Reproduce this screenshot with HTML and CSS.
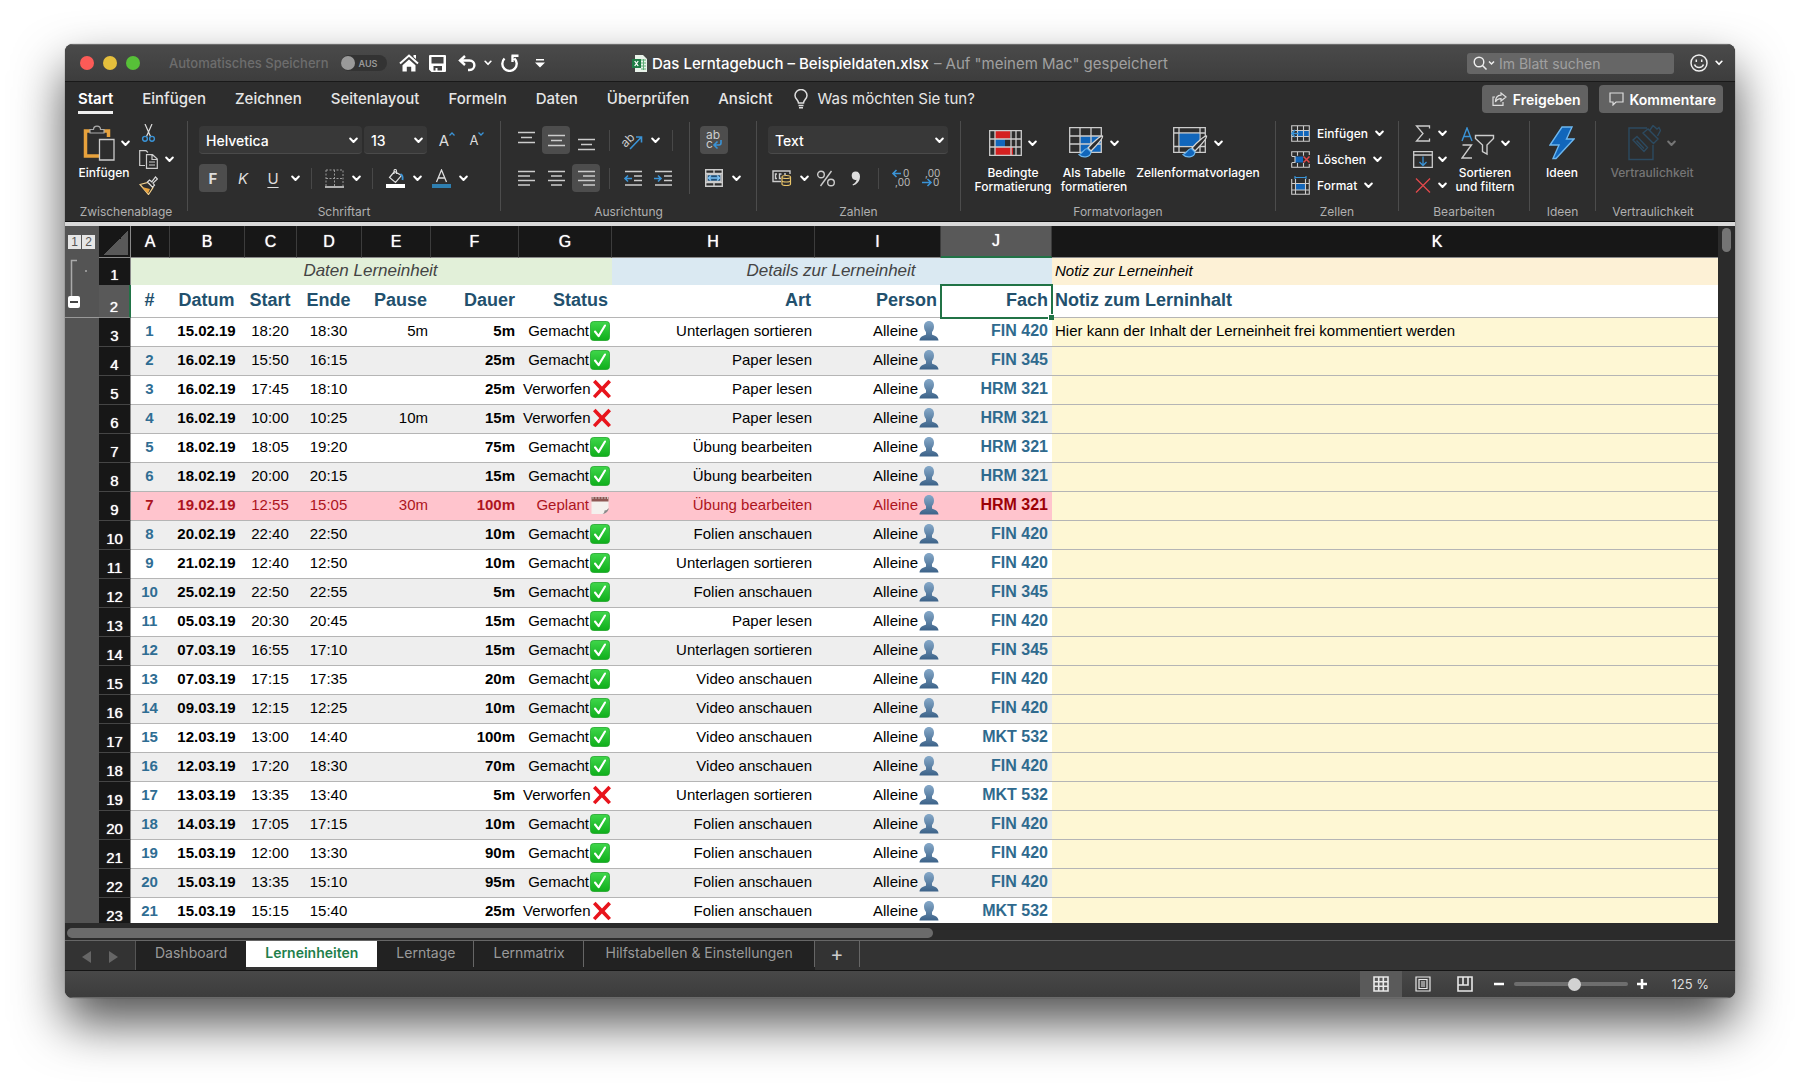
FILE: index.html
```html
<!DOCTYPE html>
<html lang="de">
<head>
<meta charset="utf-8">
<meta name="viewport" content="width=device-width, initial-scale=1">
<title>Das Lerntagebuch – Beispieldaten.xlsx</title>
<link rel="stylesheet" href="styles.css">
</head>
<body>
<svg class="defs" aria-hidden="true">
  <defs>
    <linearGradient id="green" x1="0" y1="0" x2="0" y2="1"><stop offset="0" stop-color="#3fd64a"/><stop offset="1" stop-color="#0fae1b"/></linearGradient>
    <linearGradient id="bust" x1="0" y1="0" x2="0" y2="1"><stop offset="0" stop-color="#86a9c9"/><stop offset="1" stop-color="#3c6288"/></linearGradient>
    <symbol id="chev" viewBox="0 0 9 7"><path d="M1.2 1.5l3.3 3.5 3.3-3.5" fill="none" stroke="currentColor" stroke-width="2" stroke-linecap="round" stroke-linejoin="round"/></symbol>
    <symbol id="ok" viewBox="0 0 20 20"><rect x=".5" y=".5" width="19" height="19" rx="3" fill="url(#green)" stroke="#1fa52a" stroke-width=".8"/><path d="M5 10.5l3.6 4.6L15 4.5" fill="none" stroke="#fff" stroke-width="2.1" stroke-linecap="round" stroke-linejoin="round"/></symbol>
    <symbol id="no" viewBox="0 0 20 20"><path d="M3.6.8L10 7.4 16.4.8l2.6 2.4-6.3 6.9 6.3 6.8-2.6 2.4-6.5-6.7-6.5 6.7-2.5-2.4 6.4-6.8L1 3.2z" fill="#e8141c"/></symbol>
    <symbol id="one" viewBox="0 0 20 20"><path d="M10 0c3.2 0 5 2.400 5 5.600 0 2.600-1 4.300-2 5.400v2.400c1.500 1.300 6.500 1.600 6.500 6.200H.5c0-4.600 5-4.900 6.500-6.200V11C6 9.900 5 8.200 5 5.600 5 2.400 6.800 0 10 0z" fill="url(#bust)"/></symbol>
    <symbol id="cal" viewBox="0 0 20 20"><path d="M1.500 2h17v11l-5 6h-12z" fill="#f4f1ee"/><path d="M1.500 2h17v4.500h-17z" fill="#8e5753"/><path d="M3 1v3M6 1v3M9 1v3M12 1v3M15 1v3M17.500 1v3" stroke="#ddd" stroke-width=".8"/><path d="M12.500 19c1.500-1 2-2 2-3.500 2 0 3-.8 4-2.500v1.500c-1 2.500-3 4-6 4.500z" fill="#8a8a8a"/></symbol>
    <symbol id="brush" viewBox="0 0 26 24"><path d="M24.500 1c-1.500-.5-10 6.500-14.500 12l3 3C17.500 11.500 25 3 24.500 1z" fill="#2d2d2d" stroke="#d5d5d5" stroke-width="1.300"/><path d="M9.500 13.500c-4 0-4 4.500-8.500 6 3 3.500 11.500 3.500 12-2.500z" fill="#1166bb" stroke="#6cb6ee" stroke-width="1.200"/></symbol>
  </defs>
</svg>

<main class="window">
  <header class="titlebar">
    <div class="quick">
      <span class="light red"></span><span class="light yellow"></span><span class="light green"></span>
      <label class="autosave" for="autosave">Automatisches Speichern</label>
      <span class="toggle"><input id="autosave" type="checkbox"><span>AUS</span></span>
      <button class="plain home" aria-label="Startseite"><svg width="20" height="18" viewBox="0 0 20 18"><path d="M1 9.500L10 1.500l9 8" fill="none" stroke="#fff" stroke-width="2"/><path d="M10 5.500l6.500 5.700V17.500h-4.300v-4.700H7.800v4.700H3.500v-6.300zM14.500 1H17v4l-2.500-2z" fill="#fff"/></svg></button>
      <button class="plain save" aria-label="Speichern"><svg width="17" height="17" viewBox="0 0 17 17"><path fill="#fff" fill-rule="evenodd" d="M1 0h15a1 1 0 011 1v15a1 1 0 01-1 1H2.500L0 14.500V1a1 1 0 011-1zM2.500 2v6.500h12V2zM4.500 11v4.500h2V13h2v2.500H13V11z"/></svg></button>
      <button class="plain undo" aria-label="Rückgängig"><svg width="18" height="17" viewBox="0 0 18 17"><path d="M7 1L2 5.500 7 10M2.500 5.500h9c6.500 0 6.500 9.500 0 9.500H10" fill="none" stroke="#fff" stroke-width="2.400"/></svg></button>
      <button class="plain chevron undo-menu" aria-label="Liste"><svg width="8" height="6"><use href="#chev"/></svg></button>
      <button class="plain redo" aria-label="Wiederholen"><svg width="18" height="18" viewBox="0 0 18 18"><path d="M3.500 4.500a7.200 7.200 0 1 0 9.800-.2M11.500 1.500v6.500M10.500 1.800H17.500" fill="none" stroke="#fff" stroke-width="2.400"/></svg></button>
      <button class="plain more" aria-label="Anpassen"><svg width="10" height="9" viewBox="0 0 10 9"><path d="M1 0h8v1.500H1zM0 3.500h10L5 8.500z" fill="#fff"/></svg></button>
    </div>
    <h1 class="doc">
      <svg width="15" height="17" viewBox="0 0 15 17"><path d="M3 0h8l4 4v13H3z" fill="#e9f3ea"/><path d="M9 5h5M9 8h5M9 11h5M9 14h5M11.500 4v11" stroke="#5fae77" stroke-width="1"/><path d="M0 4h9v9H0z" fill="#1e7c45"/><path d="M2.700 6l3.500 5M6.200 6l-3.500 5" stroke="#fff" stroke-width="1.300"/></svg>
      <b>Das Lerntagebuch – Beispieldaten.xlsx</b><span>– Auf "meinem Mac" gespeichert</span>
    </h1>
    <div class="find">
      <label class="search"><svg width="22" height="14" viewBox="0 0 22 14"><circle cx="6" cy="6" r="4.800" fill="none" stroke="#eee" stroke-width="1.400"/><path d="M9.500 9.500l4 4M16 5.500l2.500 2.500L21 5.500" fill="none" stroke="#eee" stroke-width="1.500"/></svg><input type="search" placeholder="Im Blatt suchen" aria-label="Im Blatt suchen"></label>
      <button class="plain smile" aria-label="Feedback"><svg width="18" height="18" viewBox="0 0 18 18" fill="none" stroke="#eee" stroke-width="1.500"><circle cx="9" cy="9" r="8"/><path d="M4.500 10.500c1.500 4 7.500 4 9 0M6.300 5.500v2.500M11.700 5.500v2.500"/></svg><svg width="8" height="6"><use href="#chev"/></svg></button>
    </div>
  </header>

  <nav class="tabs">
    <a href="#start" class="current">Start</a><a href="#einfuegen">Einfügen</a><a href="#zeichnen">Zeichnen</a><a href="#layout">Seitenlayout</a><a href="#formeln">Formeln</a><a href="#daten">Daten</a><a href="#pruefen">Überprüfen</a><a href="#ansicht">Ansicht</a>
    <a href="#hilfe" class="tell"><svg width="14" height="20" viewBox="0 0 14 20" fill="none" stroke="#ddd" stroke-width="1.500"><path d="M4.500 14c0-3-3.500-4-3.500-7.500a6 6 0 0112 0c0 3.500-3.500 4.500-3.500 7.500zM4.500 16.500h5M5 18.800h4"/></svg>Was möchten Sie tun?</a>
    <span class="actions">
      <button class="action"><svg width="15" height="14" viewBox="0 0 15 14" fill="none" stroke="#ddd" stroke-width="1.200"><path d="M3 5H1v8.300h10V10"/><path d="M9 1l5 4-5 4V6.600C6 6.600 4.500 7.800 3.500 10 3.500 6 5.500 3.400 9 3.200z"/></svg>Freigeben</button>
      <button class="action"><svg width="15" height="14" viewBox="0 0 15 14" fill="none" stroke="#ddd" stroke-width="1.200"><path d="M1 1h13v9H7l-3 3v-3H1z"/></svg>Kommentare</button>
    </span>
  </nav>

  <section class="ribbon">
    <div class="group clip">
      <div class="body">
        <button class="big"><span class="pic"><svg width="32" height="36" viewBox="0 0 32 36"><path d="M8 6H2.500v25H16M21 6h4.500v6" fill="none" stroke="#e8a23c" stroke-width="3.500"/><path d="M7 8V4.500h3.500C10.500 0 17.500 0 17.500 4.500H21V8z" fill="#2d2d2d" stroke="#aaa" stroke-width="1.200"/><path d="M16.500 14.500H31V35H16.500z" fill="#2d2d2d" stroke="#ccc" stroke-width="1.300"/></svg><svg width="9" height="7"><use href="#chev"/></svg></span>Einfügen</button>
        <div class="stack">
          <button class="small" aria-label="Ausschneiden"><svg width="19" height="18" viewBox="0 0 19 18" fill="none"><path d="M6 0l5.500 12.500M13 0L7.500 12.500" stroke="#ddd" stroke-width="1.200"/><circle cx="6" cy="14.800" r="2.400" stroke="#3a93d6" stroke-width="1.400"/><circle cx="13" cy="14.800" r="2.400" stroke="#3a93d6" stroke-width="1.400"/></svg></button>
          <button class="small" aria-label="Kopieren"><svg width="19" height="19" viewBox="0 0 19 19" fill="none" stroke="#ccc" stroke-width="1.200"><path d="M6 15.500H.7V.7H7L9 2.500M7.500 4.700h6L18.300 9v9.300H7.500zM13 5v4.500h5M10 12h6M10 15h6"/></svg><svg width="9" height="7"><use href="#chev"/></svg></button>
          <button class="small" aria-label="Format übertragen"><svg width="19" height="19" viewBox="0 0 19 19"><path d="M1 8.500L9 6.500l5 5-4.500 7z" fill="#2d2d2d" stroke="#f3d08c" stroke-width="1.200"/><path d="M3 11l8 2-2 4.500z" fill="#e8a23c"/><path d="M8.500 6l2-2 2.300 1.800L16.500 1l2 2-4.500 4 1.500 2.200-2 2z" fill="#2d2d2d" stroke="#ddd" stroke-width="1.200"/></svg></button>
        </div>
      </div>
      <span class="name">Zwischenablage</span>
    </div>
    <i class="rule"></i>
    <div class="group font">
      <div class="rows">
        <div class="row">
          <span class="pick family"><select aria-label="Schriftart"><option>Helvetica</option></select><svg width="9" height="7"><use href="#chev"/></svg></span>
          <span class="pick size"><select aria-label="Schriftgrad"><option>13</option></select><svg width="9" height="7"><use href="#chev"/></svg></span>
          <button class="ib grow" aria-label="Vergrößern"><span>A</span><svg width="6" height="4" viewBox="0 0 6 4"><path d="M.5 3.500L3 1l2.500 2.500" fill="none" stroke="#3a93d6" stroke-width="1.300"/></svg></button>
          <button class="ib shrink" aria-label="Verkleinern"><span>A</span><svg width="6" height="4" viewBox="0 0 6 4"><path d="M.5.5L3 3 5.500.5" fill="none" stroke="#3a93d6" stroke-width="1.300"/></svg></button>
        </div>
        <div class="row">
          <button class="ib on bold">F</button><button class="ib ital">K</button><button class="ib under">U</button><button class="ch" aria-label="Unterstreichung"><svg width="9" height="7"><use href="#chev"/></svg></button>
          <i class="sep"></i>
          <button class="ib" aria-label="Rahmen"><svg width="19" height="19" viewBox="0 0 19 19"><path d="M1 1h17v16M1 1v16M9.500 1v16M1 9.500h17" fill="none" stroke="#999" stroke-width="1" stroke-dasharray="2 1.500"/><path d="M0 18h19" stroke="#ddd" stroke-width="1.600"/></svg></button><button class="ch" aria-label="Rahmenart"><svg width="9" height="7"><use href="#chev"/></svg></button>
          <i class="sep"></i>
          <button class="ib" aria-label="Füllfarbe"><svg width="19" height="19" viewBox="0 0 19 19"><path d="M8.500 2.500L3.500 8.500l6 5 6-7zM8 5V2c0-2 2.500-2 2.500 0v3" fill="none" stroke="#ddd" stroke-width="1.200"/><path d="M14.500 5c2 1 2.500 3 2 6" fill="none" stroke="#3a93d6" stroke-width="1.800"/><path d="M0 15h19v4H0z" fill="#fff"/></svg></button><button class="ch" aria-label="Füllfarben"><svg width="9" height="7"><use href="#chev"/></svg></button>
          <button class="ib" aria-label="Schriftfarbe"><svg width="19" height="19" viewBox="0 0 19 19"><path d="M4.500 13L9.500 1l5 12M6 9h7" fill="none" stroke="#ddd" stroke-width="1.300"/><path d="M0 15h19v4H0z" fill="#2f7fb0"/></svg></button><button class="ch" aria-label="Schriftfarben"><svg width="9" height="7"><use href="#chev"/></svg></button>
        </div>
      </div>
      <span class="name">Schriftart</span>
    </div>
    <i class="rule"></i>
    <div class="group align">
      <div class="body">
        <div class="rows">
          <div class="row">
            <button class="ib" aria-label="Oben"><svg width="17" height="17"><path d="M0 .5h17M3 5.500h11M0 10.500h17"/></svg></button><button class="ib on" aria-label="Mitte"><svg width="17" height="17"><path d="M0 3.500h17M3 8.500h11M0 13.500h17"/></svg></button><button class="ib" aria-label="Unten"><svg width="17" height="17"><path d="M0 7.500h17M3 12.500h11M0 17.500h17"/></svg></button>
            <i class="sep"></i>
            <button class="ib" aria-label="Ausrichtung"><svg width="20" height="18" viewBox="0 0 20 18"><text x="-2" y="14" class="ab" transform="rotate(-45 4 10)">ab</text><path d="M7 18L18 6.500M13 6h5.500v5.500" class="blue"/></svg></button><button class="ch" aria-label="Ausrichtungen"><svg width="9" height="7"><use href="#chev"/></svg></button>
            <i class="sep"></i>
          </div>
          <div class="row">
            <button class="ib" aria-label="Links"><svg width="17" height="17"><path d="M0 1.500h17M0 6h12M0 10.500h17M0 15h12"/></svg></button><button class="ib" aria-label="Zentriert"><svg width="17" height="17"><path d="M0 1.500h17M3 6h11M0 10.500h17M3 15h11"/></svg></button><button class="ib on" aria-label="Rechts"><svg width="17" height="17"><path d="M0 1.500h17M5 6h12M0 10.500h17M5 15h12"/></svg></button>
            <i class="sep"></i>
            <button class="ib" aria-label="Einzug verkleinern"><svg width="18" height="17"><path d="M1 1.500h17M10 6h8M10 10.500h8M1 15h17"/><path d="M8 8.500H1M4 5.500l-3 3 3 3" class="blue"/></svg></button><button class="ib" aria-label="Einzug vergrößern"><svg width="18" height="17"><path d="M1 1.500h17M10 6h8M10 10.500h8M1 15h17"/><path d="M0 8.500h7M4 5.500l3 3-3 3" class="blue"/></svg></button>
          </div>
        </div>
        <i class="mid"></i>
        <div class="rows">
          <div class="row"><button class="ib on" aria-label="Umbruch"><svg width="18" height="20" viewBox="0 0 18 20"><path d="M16 10v3q0 2-2 2h-5M12.500 11.500l-3.500 3.500 3.500 3.500" class="blue"/><text x="1" y="9" class="ab">ab<tspan x="1" y="18">c</tspan></text></svg></button></div>
          <div class="row"><button class="ib" aria-label="Verbinden"><svg width="18" height="18" viewBox="0 0 18 18"><path d="M.7.7h16.600v16.600H.7zM.7 4.500h16.600M.7 13.500h16.600M9 .7v4M9 13.500v4"/><path d="M2 5.500h14v7H2z" fill="#1c4e78"/><path d="M3 9h12M6 6.500L3.500 9 6 11.500M12 6.500L14.500 9 12 11.500" class="light-blue"/></svg></button><button class="ch" aria-label="Verbinden"><svg width="9" height="7"><use href="#chev"/></svg></button></div>
        </div>
      </div>
      <span class="name">Ausrichtung</span>
    </div>
    <i class="rule"></i>
    <div class="group number">
      <div class="rows">
        <div class="row"><span class="pick format"><select aria-label="Zahlenformat"><option>Text</option></select><svg width="9" height="7"><use href="#chev"/></svg></span></div>
        <div class="row">
          <button class="ib" aria-label="Währung"><svg width="20" height="16" viewBox="0 0 20 16"><path d="M9 11.500H1V1h17v3M5 4H3.500v4.500H5M9.500 4H7.500v4.500h1.500M14 4h-2"/><path d="M10 7v7c0 2 8.500 2 8.500 0V7c0-2-8.500-2-8.500 0zc0 2 8.500 2 8.500 0M10 10.500c0 2 8.500 2 8.500 0" class="gold"/></svg></button><button class="ch" aria-label="Währungen"><svg width="9" height="7"><use href="#chev"/></svg></button>
          <button class="ib pct" aria-label="Prozent"><svg width="18" height="17" viewBox="0 0 18 17"><circle cx="4" cy="4.500" r="3.300"/><circle cx="14" cy="12.500" r="3.300"/><path d="M14.500 1l-11 15"/></svg></button><button class="ib" aria-label="Tausender"><svg width="10" height="15" viewBox="0 0 10 15"><path d="M4.500.5C7.500.5 9 2.500 9 5.500c0 5-3.500 8-7 9L1.500 13.500C4 12.300 5.500 10.500 5.500 8.700 2.500 9.500.7 7.500.7 4.500.7 2 2.300.5 4.500.5z" fill="#ddd" stroke="none"/></svg></button>
          <i class="sep"></i>
          <button class="ib" aria-label="Dezimale hinzufügen"><svg width="18" height="18" viewBox="0 0 18 18"><text x="11" y="8" class="dec">0</text><text x="3" y="17" class="dec">,00</text><path d="M9 4.500H1M4.500 1L1 4.500 4.500 8" class="blue"/></svg></button><button class="ib" aria-label="Dezimale entfernen"><svg width="18" height="18" viewBox="0 0 18 18"><text x="3" y="8" class="dec">,00</text><text x="11" y="17" class="dec">0</text><path d="M0 13.500h9M5.500 10L9 13.500 5.500 17" class="blue"/></svg></button>
        </div>
      </div>
      <span class="name">Zahlen</span>
    </div>
    <i class="rule"></i>
    <div class="group styles">
      <div class="body">
        <button class="big w78"><span class="pic"><svg width="33" height="26" viewBox="0 0 33 26"><path d="M6 1h15v8H6zM6 17h18v8H6z" fill="#d42020"/><path d="M6 9h10v8H6z" fill="#1166bb"/><path d="M.7.7h31.600v24.600H.7zM.7 9h31.600M.7 17h31.600M6 .7v24.600M22 .7v24.600M27 .7v24.600" fill="none" stroke="#ccc" stroke-width="1.300"/></svg><svg width="9" height="7"><use href="#chev"/></svg></span>Bedingte<br>Formatierung</button>
        <button class="big w68"><span class="pic"><svg width="35" height="32" viewBox="0 0 35 32"><path d="M11 9h21v16H11z" fill="#1166bb"/><path d="M.7.7h31.600v24.600H.7zM.7 9h31.600M.7 17h31.600M11 .7v24.600M22 .7v24.600" fill="none" stroke="#ccc" stroke-width="1.300"/><svg x="9" y="8" width="26" height="24"><use href="#brush"/></svg></svg><svg width="9" height="7"><use href="#chev"/></svg></span>Als Tabelle<br>formatieren</button>
        <button class="big w124"><span class="pic"><svg width="35" height="32" viewBox="0 0 35 32"><path d="M6 6h21v13H6z" fill="#1166bb"/><path d="M.7.7h31.600v24.600H.7zM.7 6h31.600M.7 19.500h31.600M6 .7v24.600M27 .7v24.600" fill="none" stroke="#ccc" stroke-width="1.300"/><path d="M6.700 6.700h19.600v12.100H6.700z" fill="#1166bb"/><svg x="9" y="8" width="26" height="24"><use href="#brush"/></svg></svg><svg width="9" height="7"><use href="#chev"/></svg></span>Zellenformatvorlagen</button>
      </div>
      <span class="name">Formatvorlagen</span>
    </div>
    <i class="rule"></i>
    <div class="group cells">
      <div class="stack">
        <button class="small"><svg width="19" height="17" viewBox="0 0 19 17"><path d="M6 5.500h12v6H6z" fill="#1166bb"/><path d="M.7.7h17.600v15.600H.7zM.7 5.500h17.600M.7 11.500h17.600M6.500.7v15.600M12.500.7v15.600" fill="none" stroke="#ccc" stroke-width="1.100"/><path d="M8 8.500H1M4 5L.800 8.500 4 12" fill="none" stroke="#3a93d6" stroke-width="1.600"/></svg><b>Einfügen</b><svg width="9" height="7"><use href="#chev"/></svg></button>
        <button class="small"><svg width="19" height="17" viewBox="0 0 19 17"><path d="M4 5.500h8v6H4z" fill="#1166bb"/><path d="M.7 5V.7h17.600V4M.7 12v4.300h17.600V13M.7 5.500H4v6H.7M6.500.7v4M12.500.7v4M6.500 12v4.300M12.500 12v4.300" fill="none" stroke="#ccc" stroke-width="1.100"/><path d="M12.500 5.500l6 6M18.500 5.500l-6 6" fill="none" stroke="#e0494b" stroke-width="1.500"/></svg><b>Löschen</b><svg width="9" height="7"><use href="#chev"/></svg></button>
        <button class="small"><svg width="19" height="19" viewBox="0 0 19 19"><path d="M5 8h9v6H5z" fill="#1166bb"/><path d="M.7 3v15.300h17.600V3M.7 7.500h17.600M.7 14h17.600M4.500 3v15.300M14.500 3v15.300" fill="none" stroke="#ccc" stroke-width="1.100"/><path d="M4 1.500h11M4 0v3M15 0v3" fill="none" stroke="#3a93d6" stroke-width="1.200"/></svg><b>Format</b><svg width="9" height="7"><use href="#chev"/></svg></button>
      </div>
      <span class="name">Zellen</span>
    </div>
    <i class="rule"></i>
    <div class="group edit">
      <div class="body">
        <div class="stack">
          <button class="small" aria-label="Summe"><svg width="20" height="17" viewBox="0 0 20 17"><path d="M16.500 3.500V1H3.500L10 8.500 3.500 16h13v-2.500" fill="none" stroke="#ccc" stroke-width="1.300"/></svg><svg width="9" height="7"><use href="#chev"/></svg></button>
          <button class="small" aria-label="Ausfüllen"><svg width="20" height="17" viewBox="0 0 20 17"><path d="M.7.7h18.600v15.600H.7zM.7 4h18.600" fill="none" stroke="#ccc" stroke-width="1.300"/><path d="M10 5.500v9M6.500 11l3.500 3.500 3.500-3.500" fill="none" stroke="#3a93d6" stroke-width="1.300"/></svg><svg width="9" height="7"><use href="#chev"/></svg></button>
          <button class="small" aria-label="Löschen"><svg width="20" height="15" viewBox="0 0 20 15"><path d="M3 .5l14 14M17 .5l-14 14" fill="none" stroke="#e0494b" stroke-width="1.300"/></svg><svg width="9" height="7"><use href="#chev"/></svg></button>
        </div>
        <button class="big w60"><span class="pic"><svg width="34" height="32" viewBox="0 0 34 32" fill="none" stroke="#ccc" stroke-width="1.400"><path d="M1 14L6 1l5 13M2.800 9.500h6.500" stroke="#3a93d6"/><path d="M1.500 18h9L1 31h10"/><path d="M14.500 8.500h18v3L26 18v9l-4.500-2.500V18l-7-6.500z"/></svg><svg width="9" height="7"><use href="#chev"/></svg></span>Sortieren<br>und filtern</button>
      </div>
      <span class="name">Bearbeiten</span>
    </div>
    <i class="rule"></i>
    <div class="group ideas">
      <div class="body"><button class="big w60"><span class="pic"><svg width="26" height="34" viewBox="0 0 26 34"><path d="M13 1h10l-5.500 12H25L7 32.500H4L10 19H1z" fill="#1166bb" stroke="#6cb6ee" stroke-width="1.400"/></svg></span>Ideen</button></div>
      <span class="name">Ideen</span>
    </div>
    <i class="rule"></i>
    <div class="group secret">
      <div class="body"><button class="big w84" disabled><span class="pic"><svg width="33" height="36" viewBox="0 0 33 36" fill="none" stroke="#2c4a60" stroke-width="1.400"><path d="M19 3H1v31.500h24V20"/><path d="M5 15l4-3.500 10.500 11L16 26.500zM8.500 15.500l7.500 8M15 8l5-4 10 10-4.500 4.500zM22 5l3-4.500L29 4l2-1.500 1.500 3-3 5.500"/></svg><svg width="9" height="7"><use href="#chev"/></svg></span>Vertraulichkeit</button></div>
      <span class="name">Vertraulichkeit</span>
    </div>
  </section>

  <section class="sheet">
    <div class="outline">
      <div class="levels"><button>1</button><button>2</button></div>
      <svg class="bracket" width="34" height="37" viewBox="0 0 34 37"><path d="M12 1.500H6.500V37" fill="none" stroke="#aaa" stroke-width="1.500"/><circle cx="21" cy="12" r="1" fill="#aaa"/></svg>
      <button class="collapse" aria-label="Gruppe schließen"></button>
    </div>
    <div class="grid">
    <table>
      <colgroup><col class="cn"><col class="ca"><col class="cb"><col class="cc"><col class="cd"><col class="ce"><col class="cf"><col class="cg"><col class="chh"><col class="ci"><col class="cj"><col></colgroup>
      <thead><tr><th class="corner"></th><th>A<th>B<th>C<th>D<th>E<th>F<th>G<th>H<th>I<th class="sel">J<th>K</tr></thead>
      <tbody>
        <tr class="bands"><th>1<td colspan="7" class="g">Daten Lerneinheit<td colspan="3" class="b">Details zur Lerneinheit<td class="y">Notiz zur Lerneinheit</tr>
        <tr class="heads"><th class="sel">2<td>#<td>Datum<td>Start<td>Ende<td>Pause<td>Dauer<td>Status<td>Art<td>Person<td class="active">Fach<i></i><td>Notiz zum Lerninhalt</tr>
        <tr><th>3<td>1<td>15.02.19<td>18:20<td>18:30<td>5m<td>5m<td>Gemacht<svg><use href="#ok"/></svg><td>Unterlagen sortieren<td>Alleine<svg><use href="#one"/></svg><td>FIN 420<td>Hier kann der Inhalt der Lerneinheit frei kommentiert werden</tr>
        <tr><th>4<td>2<td>16.02.19<td>15:50<td>16:15<td><td>25m<td>Gemacht<svg><use href="#ok"/></svg><td>Paper lesen<td>Alleine<svg><use href="#one"/></svg><td>FIN 345<td></tr>
        <tr><th>5<td>3<td>16.02.19<td>17:45<td>18:10<td><td>25m<td>Verworfen<svg><use href="#no"/></svg><td>Paper lesen<td>Alleine<svg><use href="#one"/></svg><td>HRM 321<td></tr>
        <tr><th>6<td>4<td>16.02.19<td>10:00<td>10:25<td>10m<td>15m<td>Verworfen<svg><use href="#no"/></svg><td>Paper lesen<td>Alleine<svg><use href="#one"/></svg><td>HRM 321<td></tr>
        <tr><th>7<td>5<td>18.02.19<td>18:05<td>19:20<td><td>75m<td>Gemacht<svg><use href="#ok"/></svg><td>Übung bearbeiten<td>Alleine<svg><use href="#one"/></svg><td>HRM 321<td></tr>
        <tr><th>8<td>6<td>18.02.19<td>20:00<td>20:15<td><td>15m<td>Gemacht<svg><use href="#ok"/></svg><td>Übung bearbeiten<td>Alleine<svg><use href="#one"/></svg><td>HRM 321<td></tr>
        <tr class="planned"><th>9<td>7<td>19.02.19<td>12:55<td>15:05<td>30m<td>100m<td>Geplant<svg><use href="#cal"/></svg><td>Übung bearbeiten<td>Alleine<svg><use href="#one"/></svg><td>HRM 321<td></tr>
        <tr><th>10<td>8<td>20.02.19<td>22:40<td>22:50<td><td>10m<td>Gemacht<svg><use href="#ok"/></svg><td>Folien anschauen<td>Alleine<svg><use href="#one"/></svg><td>FIN 420<td></tr>
        <tr><th>11<td>9<td>21.02.19<td>12:40<td>12:50<td><td>10m<td>Gemacht<svg><use href="#ok"/></svg><td>Unterlagen sortieren<td>Alleine<svg><use href="#one"/></svg><td>FIN 420<td></tr>
        <tr><th>12<td>10<td>25.02.19<td>22:50<td>22:55<td><td>5m<td>Gemacht<svg><use href="#ok"/></svg><td>Folien anschauen<td>Alleine<svg><use href="#one"/></svg><td>FIN 345<td></tr>
        <tr><th>13<td>11<td>05.03.19<td>20:30<td>20:45<td><td>15m<td>Gemacht<svg><use href="#ok"/></svg><td>Paper lesen<td>Alleine<svg><use href="#one"/></svg><td>FIN 420<td></tr>
        <tr><th>14<td>12<td>07.03.19<td>16:55<td>17:10<td><td>15m<td>Gemacht<svg><use href="#ok"/></svg><td>Unterlagen sortieren<td>Alleine<svg><use href="#one"/></svg><td>FIN 345<td></tr>
        <tr><th>15<td>13<td>07.03.19<td>17:15<td>17:35<td><td>20m<td>Gemacht<svg><use href="#ok"/></svg><td>Video anschauen<td>Alleine<svg><use href="#one"/></svg><td>FIN 420<td></tr>
        <tr><th>16<td>14<td>09.03.19<td>12:15<td>12:25<td><td>10m<td>Gemacht<svg><use href="#ok"/></svg><td>Video anschauen<td>Alleine<svg><use href="#one"/></svg><td>FIN 420<td></tr>
        <tr><th>17<td>15<td>12.03.19<td>13:00<td>14:40<td><td>100m<td>Gemacht<svg><use href="#ok"/></svg><td>Video anschauen<td>Alleine<svg><use href="#one"/></svg><td>MKT 532<td></tr>
        <tr><th>18<td>16<td>12.03.19<td>17:20<td>18:30<td><td>70m<td>Gemacht<svg><use href="#ok"/></svg><td>Video anschauen<td>Alleine<svg><use href="#one"/></svg><td>FIN 420<td></tr>
        <tr><th>19<td>17<td>13.03.19<td>13:35<td>13:40<td><td>5m<td>Verworfen<svg><use href="#no"/></svg><td>Unterlagen sortieren<td>Alleine<svg><use href="#one"/></svg><td>MKT 532<td></tr>
        <tr><th>20<td>18<td>14.03.19<td>17:05<td>17:15<td><td>10m<td>Gemacht<svg><use href="#ok"/></svg><td>Folien anschauen<td>Alleine<svg><use href="#one"/></svg><td>FIN 420<td></tr>
        <tr><th>21<td>19<td>15.03.19<td>12:00<td>13:30<td><td>90m<td>Gemacht<svg><use href="#ok"/></svg><td>Folien anschauen<td>Alleine<svg><use href="#one"/></svg><td>FIN 420<td></tr>
        <tr><th>22<td>20<td>15.03.19<td>13:35<td>15:10<td><td>95m<td>Gemacht<svg><use href="#ok"/></svg><td>Folien anschauen<td>Alleine<svg><use href="#one"/></svg><td>FIN 420<td></tr>
        <tr><th>23<td>21<td>15.03.19<td>15:15<td>15:40<td><td>25m<td>Verworfen<svg><use href="#no"/></svg><td>Folien anschauen<td>Alleine<svg><use href="#one"/></svg><td>MKT 532<td></tr>
      </tbody>
    </table>
    </div>
    <div class="vscroll"><span></span></div>
  </section>
  <div class="hscroll"><span></span></div>

  <nav class="sheets">
    <span class="arrows"><button aria-label="Zurück"></button><button class="next" aria-label="Weiter"></button></span>
    <a href="#dashboard" class="t1">Dashboard</a><a href="#lerneinheiten" class="open">Lerneinheiten</a><a href="#lerntage">Lerntage</a><a href="#lernmatrix">Lernmatrix</a><a href="#hilfstabellen" class="t5">Hilfstabellen &amp; Einstellungen</a>
    <button class="add">+</button>
  </nav>

  <footer class="status">
    <button class="view on" aria-label="Normal"><svg width="16" height="16" viewBox="0 0 16 16"><path d="M1 1h14v14H1zM1 5.700h14M1 10.300h14M5.700 1v14M10.300 1v14"/></svg></button>
    <button class="view" aria-label="Seitenlayout"><svg width="16" height="16" viewBox="0 0 16 16"><path d="M1 1h14v14H1zM4 3.500h8v9H4zM6 6h4M6 8h4M6 10h4" stroke-width="1.200"/></svg></button>
    <button class="view" aria-label="Umbruchvorschau"><svg width="16" height="16" viewBox="0 0 16 16"><path d="M1 1h14v14H1zM1 9h10V1M6 1v8"/></svg></button>
    <button class="zoom-step" aria-label="Verkleinern"><svg width="10" height="10"><path d="M0 5h10"/></svg></button>
    <input type="range" min="10" max="240" value="134" aria-label="Zoom">
    <button class="zoom-step" aria-label="Vergrößern"><svg width="10" height="10"><path d="M0 5h10M5 0v10"/></svg></button>
    <output>125 %</output>
  </footer>
</main>
</body>
</html>
```
FILE: styles.css
```css
* { box-sizing: border-box; }
body {
  margin: 0;
  min-height: 100vh;
  padding: 44px 65px 86px;
  background: #fff;
  color: #fff;
  font-family: Inter, "Liberation Sans", sans-serif;
  font-size: 12px;
  overflow: hidden;
}
button, select, input { font: inherit; color: inherit; margin: 0; }
button { padding: 0; border: 0; background: none; }
a { color: inherit; text-decoration: none; }
svg { display: block; flex: none; }
.defs { position: absolute; width: 0; height: 0; }

.window {
  display: flex;
  flex-direction: column;
  height: calc(100vh - 130px);
  border-radius: 8px;
  overflow: hidden;
  background: #2d2d2d;
  box-shadow: 0 25px 50px rgba(0, 0, 0, .68), 0 0 1px #444;
}

/* Title bar */
.titlebar {
  flex: none;
  display: grid;
  grid-template-columns: 1fr auto 1fr;
  align-items: center;
  height: 38px;
  background: linear-gradient(#4a4a4a, #3d3d3d);
  border-top: 1px solid #6d6d6d;
  border-bottom: 1px solid #191919;
}
.quick { display: flex; align-items: center; padding-left: 15px; }
.light { width: 14px; height: 14px; border-radius: 50%; margin-right: 9px; }
.red { background: #fc5b57; }
.yellow { background: #e5bf3c; }
.green { background: #57c038; }
.autosave { margin-left: 20px; font-size: 13px; font-weight: 500; color: #6d6d6d; white-space: nowrap; }
.toggle {
  display: flex;
  align-items: center;
  gap: 4px;
  width: 46px;
  height: 16px;
  margin: 0 12px;
  border-radius: 8px;
  background: #333;
  color: #999;
  font-size: 9px;
  font-weight: 600;
}
.toggle input { appearance: none; width: 14px; height: 14px; border-radius: 50%; background: #9a9a9a; }
.save { margin-left: 10px; }
.undo { margin-left: 12px; }
.undo-menu { margin-left: 8px; }
.redo { margin-left: 9px; }
.more { margin-left: 16px; }
.doc { display: flex; align-items: center; gap: 5px; margin: 0; font-size: 15px; font-weight: 400; white-space: nowrap; }
.doc b { font-weight: 500; }
.doc span { color: #a0a0a0; }
.find { display: flex; justify-content: flex-end; align-items: center; padding-right: 12px; }
.search {
  display: flex;
  align-items: center;
  gap: 4px;
  width: 207px;
  height: 21px;
  padding-left: 6px;
  border-radius: 3px;
  background: #666;
}
.search input { width: 100%; min-width: 0; padding: 0; border: 0; outline: 0; background: none; font-size: 14px; }
.search input::placeholder { color: #a0a0a0; opacity: 1; }
.smile { display: flex; align-items: center; gap: 7px; margin-left: 16px; }

/* Ribbon tabs */
.tabs {
  flex: none;
  display: flex;
  align-items: center;
  gap: 29px;
  height: 36px;
  padding: 0 12px 2px 13px;
  font-size: 15px;
  font-weight: 500;
  color: #e6e6e6;
  white-space: nowrap;
}
.tabs a { line-height: 24px; }
.tabs .current { font-weight: 600; box-shadow: 0 3px #eee; color: #fff; }
.tabs .tell { display: flex; align-items: center; gap: 10px; margin-left: -8px; font-weight: 400; }
.actions { display: flex; gap: 11px; margin-left: auto; font-size: 14px; }
.action {
  display: flex;
  align-items: center;
  gap: 6px;
  height: 28px;
  padding: 0 7px 0 10px;
  border-radius: 4px;
  background: #626262;
  color: #fff;
  font-weight: 600;
}

/* Ribbon */
.ribbon { flex: none; display: flex; height: 104px; border-bottom: 1px solid #101010; }
.group { flex: none; display: flex; flex-direction: column; padding: 8px 0 1px; }
.body { display: flex; }
.rule { flex: none; width: 1px; margin: 3px 0 10px; background: #4c4c4c; }
.name { margin-top: auto; line-height: 16px; text-align: center; color: #b0b0b0; white-space: nowrap; }
.clip { width: 122px; }
.font { width: 312px; }
.align { width: 255px; }
.number { width: 203px; }
.styles { width: 314px; }
.cells { width: 122px; }
.edit { width: 130px; }
.ideas { width: 65px; }
.secret { width: 114px; }
.font > .rows, .align .rows, .number > .rows { padding-left: 11px; }
.mid { width: 1px; height: 72px; margin: -4px 0 0 12px; background: #4c4c4c; }
.align .mid + .rows { padding-left: 10px; }
.rows { display: flex; flex-direction: column; gap: 10px; }
.row { display: flex; align-items: center; gap: 2px; }
.ch { width: 16px; height: 28px; display: grid; place-items: center; margin-left: -2px; }
.sep { width: 1px; height: 21px; margin: 0 6px; background: #484848; }
.align .sep { margin: 0 7px; }
.align .sep:last-child { margin-right: 0; }
.ib {
  display: flex;
  align-items: center;
  justify-content: center;
  width: 28px;
  height: 28px;
  border-radius: 4px;
  font-size: 15px;
  color: #ddd;
}
.on { background: #4d4d4d; }
.bold { font-weight: 700; }
.ital { font-style: italic; }
.under { text-decoration: underline; text-underline-offset: 3px; }
.grow { font-size: 15px; margin-left: 4px; }
.shrink { font-size: 13px; }
.grow svg, .shrink svg { margin-bottom: 12px; }
.align .ib svg, .number .ib svg { fill: none; stroke: #ccc; stroke-width: 1.4; overflow: visible; }
.ib .blue { stroke: #3a93d6; stroke-width: 1.6; fill: none; }
.ib .light-blue { stroke: #7cc1f2; }
.ib .gold { stroke: #e9c46a; stroke-width: 1.2; fill: #2d2d2d; }
.ab { font-size: 12px; fill: #ccc; stroke: none; }
.dec { font-size: 10px; fill: #bbb; stroke: none; }
.pct { margin-left: -2px; }
.pick { position: relative; height: 28px; }
.pick select {
  appearance: none;
  width: 100%;
  height: 28px;
  padding: 1px 7px 0;
  border: 0;
  border-bottom: 1px solid #4a4a4a;
  border-radius: 4px;
  background: #383838;
  font-size: 14px;
  font-weight: 500;
}
.pick svg { position: absolute; right: 4px; top: 11px; pointer-events: none; }
.family { width: 163px; }
.size { width: 63px; }
.format { width: 180px; }

.big { display: flex; flex-direction: column; align-items: center; line-height: 14px; font-weight: 500; white-space: nowrap; }
.pic { display: flex; align-items: center; gap: 6px; height: 34px; margin-bottom: 6px; }
.big:disabled { color: #757575; }
.clip .big { width: 52px; margin-left: 13px; }
.clip .pic { margin-left: 4px; }
.styles .body { gap: 8px; padding-left: 13px; }
.w78 { width: 78px; }
.w68 { width: 68px; }
.w124 { width: 124px; }
.w60 { width: 60px; }
.w84 { width: 84px; }
.stack { display: flex; flex-direction: column; gap: 8px; margin-top: -2px; }
.small { display: flex; align-items: center; gap: 7px; height: 18px; }
.small b { font-weight: 500; }
.clip .stack { margin-left: 9px; }
.cells .stack { padding-left: 15px; }
.edit .stack { padding-left: 14px; }
.edit .small { gap: 5px; }
.edit .big { margin-left: 8px; }
.ideas .big { margin-left: 2px; }
.secret .big { margin-left: 14px; }

/* Sheet */
.sheet {
  flex: 1;
  min-height: 0;
  display: grid;
  grid-template-columns: 34px 1fr 17px;
  grid-template-rows: 100%;
  border-top: 4px solid #d9d9d9;
  font-family: "Liberation Sans", Arial, sans-serif;
}
.outline { background: #545454; }
.levels { display: flex; gap: 1px; padding: 9px 0 0 3px; }
.levels button { width: 13px; height: 14px; background: #e6e6e6; color: #555; font-size: 12px; line-height: 14px; }
.bracket { margin-top: 10px; }
.collapse { display: grid; place-items: center; width: 12px; height: 12px; margin-left: 3px; border-radius: 2px; background: #fff; }
.collapse::after { content: ""; width: 8px; height: 2px; background: #444; }
.outline::after { content: ""; display: block; margin-top: 9px; border-top: 1px solid #999; }
.grid { overflow: hidden; background: #fff; }
/* The last column runs on past the right edge of the pane */
table { width: calc(100% + 105px); table-layout: fixed; border-collapse: separate; border-spacing: 0; color: #000; font-size: 15px; line-height: 18px; }
.cn { width: 32px; }
.ca { width: 39px; }
.cb { width: 75px; }
.cc { width: 52px; }
.cd { width: 65px; }
.ce { width: 69px; }
.cf { width: 88px; }
.cg { width: 93px; }
.chh { width: 203px; }
.ci { width: 126px; }
.cj { width: 111px; }
th, td { padding: 0 4px; white-space: nowrap; }
thead th {
  height: 32px;
  background: #171717;
  color: #fff;
  font-size: 16px;
  font-weight: 400;
  border-right: 1px solid #3c3c3c;
  border-bottom: 1px solid #8a8a8a;
  text-shadow: 0 0 1px #fff;
}
thead .sel { background: #595959; border-bottom: 2px solid #217346; }
thead .corner { background: linear-gradient(to bottom right, transparent 50%, #595959 50%) 5px 5px / 24px 24px no-repeat #171717; border-right-color: #8a8a8a; }
tbody th {
  height: 29px;
  padding: 0 0 2px;
  background: #171717;
  color: #fff;
  font-weight: 400;
  line-height: 17px;
  vertical-align: bottom;
  text-align: center;
  border-right: 1px solid #8a8a8a;
  border-bottom: 1px solid #454545;
  text-shadow: 0 0 1px #fff;
}
tbody .sel { background: #595959; border-right: 2px solid #217346; border-bottom-color: #8a8a8a; }
td { padding-bottom: 2px; text-align: right; border-bottom: 1px solid #b5b5b5; background: #fff; }
tr:nth-child(even) td { background: #eee; }
td:nth-child(-n+5) { text-align: center; padding: 0 2px 2px 0; }
td:nth-child(6) { text-align: right; padding-right: 3px; }
td:nth-child(2) { color: #2f6d93; font-weight: 700; }
td:nth-child(3), td:nth-child(7) { font-weight: 700; }
td:nth-child(8), td:nth-child(10) { padding-right: 2px; }
td:nth-child(9) { padding-right: 3px; }
td:nth-child(11) { color: #2f6a8e; font-size: 16px; font-weight: 700; }
td:nth-child(12) { text-align: left; padding-left: 3px; }
tbody tr td:nth-child(12) { background: #fef7d4; }
td svg { display: inline-block; width: 20px; height: 20px; margin-left: 1px; vertical-align: -5px; }
.planned:nth-child(n) td:not(:nth-child(12)) { background: #ffc4cd; color: #ad1420; }
.planned:nth-child(n) td:nth-child(11):not(:nth-child(12)) { color: #9c0006; }
.bands:nth-child(n) th, .bands:nth-child(n) td { height: 27px; border-bottom: 0; font-style: italic; font-weight: 400; }
.bands:nth-child(n) th { font-style: normal; }
.bands:nth-child(n) .g, .bands:nth-child(n) .b { color: #444; font-size: 17px; text-align: center; }
.bands:nth-child(n) .g { background: #e2f0d9; }
.bands:nth-child(n) .b { background: #dae9f2; }
.bands:nth-child(n) .y { background: #fdf1d6; color: #000; text-align: left; padding-left: 3px; }
.heads:nth-child(n) td { height: 33px; background: #fff; color: #22506d; font-size: 18px; font-weight: 700; }
.heads:nth-child(n) td:nth-child(n+6) { padding-right: 4px; }
.active { position: relative; }
.active i { position: absolute; inset: -1px -1px -2px -1px; border: 2px solid #217346; }
.active i::after { content: ""; position: absolute; right: -3px; bottom: -3px; width: 5px; height: 5px; background: #217346; border: 1px solid #fff; box-sizing: content-box; border-width: 1px 0 0 1px; }
.vscroll { padding: 2px 4px; background: #2b2b2b; }
.vscroll span { display: block; height: 24px; border-radius: 5px; background: #747474; }
.hscroll { flex: none; height: 18px; padding: 5px 2px 0; background: #2b2b2b; border-bottom: 1px solid #666; }
.hscroll span { display: block; width: 52%; height: 10px; border-radius: 5px; background: #6b6b6b; }

/* Sheet tabs */
.sheets {
  flex: none;
  display: flex;
  height: 30px;
  background: #333;
  border-bottom: 1px solid #151515;
  font-size: 14px;
  color: #9a9a9a;
  white-space: nowrap;
}
.arrows { display: flex; align-items: center; gap: 18px; width: 70px; padding: 2px 0 0 17px; }
.arrows button { border: 6px solid transparent; border-width: 6px 9px 6px 0; border-right-color: #666; }
.arrows .next { border-width: 6px 0 6px 9px; border-left-color: #666; }
.sheets a { flex: none; padding: 0 19px; line-height: 24px; background: linear-gradient(#666, #666) right top / 1px 26px no-repeat #222; }
.sheets .t1 { border-left: 1px solid #555; background-image: none; }
.sheets .open { height: 26px; background: #fff; color: #1f7f4b; font-weight: 600; }
.sheets .t5 { padding: 0 22px; }
.add { width: 45px; height: 26px; border-right: 1px solid #666; font-size: 20px; line-height: 24px; color: #ccc; }

/* Status bar */
.status {
  flex: none;
  display: flex;
  align-items: center;
  justify-content: flex-end;
  height: 27px;
  padding-right: 26px;
  background: linear-gradient(#484848, #3c3c3c);
  border-bottom: 1px solid #6a6a6a;
}
.view { display: grid; place-items: center; width: 42px; height: 26px; }
.view.on { background: #5a5a5a; }
.status svg { fill: none; stroke: #e8e8e8; stroke-width: 1.6; }
.zoom-step { margin-left: 8px; }
.zoom-step path { stroke: #fff; stroke-width: 2.5; }
.status input { appearance: none; width: 114px; height: 4px; margin: 0 1px 0 10px; border-radius: 2px; background: #6e6e6e; }
.status input::-webkit-slider-thumb { appearance: none; width: 13px; height: 13px; border-radius: 50%; background: #d2d2d2; }
.status output { width: 40px; margin-left: 22px; font-size: 13px; color: #ddd; white-space: nowrap; text-align: right; }
```
